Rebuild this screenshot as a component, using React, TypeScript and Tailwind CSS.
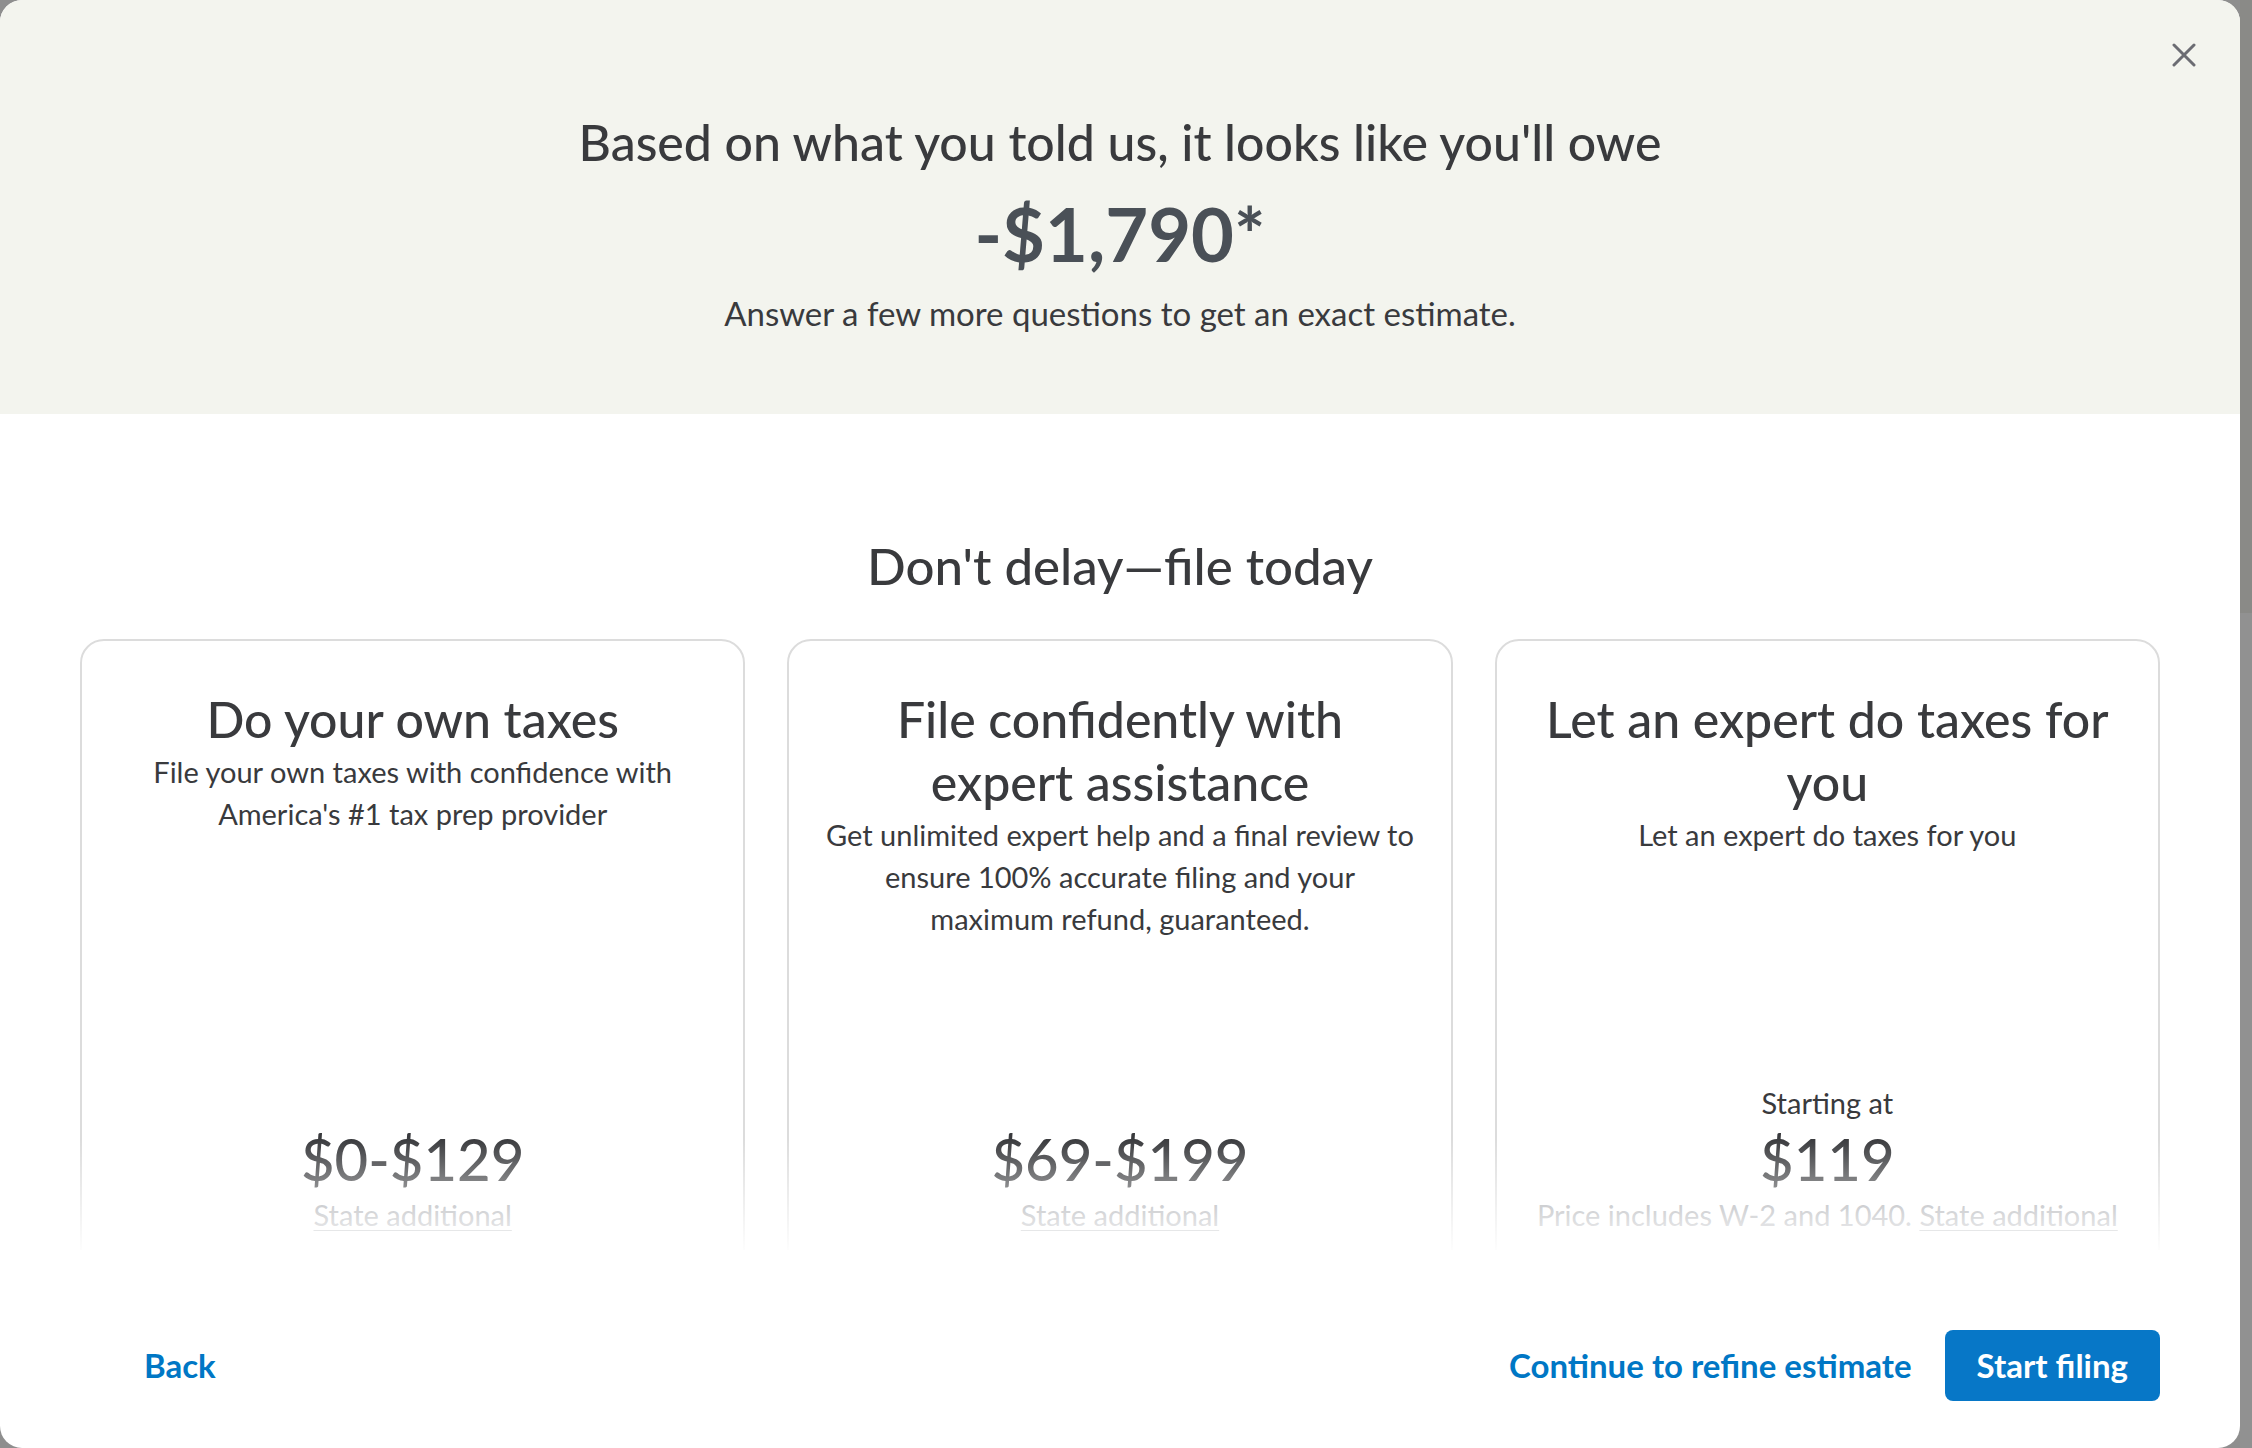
import React from 'react'

const font = { fontFamily: "Lato, 'Noto Sans', sans-serif" }

type Plan = {
  title: string[]
  sub: string[]
  starting?: boolean
  price: string
  note?: string
}

const plans: Plan[] = [
  {
    title: ['Do your own taxes'],
    sub: ['File your own taxes with confidence with', "America's #1 tax prep provider"],
    price: '$0-$129',
  },
  {
    title: ['File confidently with', 'expert assistance'],
    sub: [
      'Get unlimited expert help and a final review to',
      'ensure 100% accurate filing and your',
      'maximum refund, guaranteed.',
    ],
    price: '$69-$199',
  },
  {
    title: ['Let an expert do taxes for', 'you'],
    sub: ['Let an expert do taxes for you'],
    starting: true,
    price: '$119',
    note: 'Price includes W-2 and 1040.',
  },
]

function PlanCard({ plan }: { plan: Plan }) {
  return (
    <div className="flex h-[651px] flex-col rounded-[24px] border-2 border-[#dcdcdc] bg-white px-4 pt-[47px] text-center text-[#393a3d]">
      <h3 className="text-[50px] font-medium leading-[63px]">
        {plan.title.map(l => (
          <span key={l} className="block whitespace-nowrap">{l}</span>
        ))}
      </h3>
      <p className="text-[29px] leading-[42px]">
        {plan.sub.map(l => (
          <span key={l} className="block whitespace-nowrap">{l}</span>
        ))}
      </p>

      <div className="mt-auto mb-[52px]">
        {plan.starting && <div className="text-[29px] leading-[42px]">Starting at</div>}
        <div className="text-[58px] font-medium leading-[70px] text-[#393a3d]">{plan.price}</div>
        <div className="whitespace-nowrap text-[29px] leading-[42px] text-[#8d9096]">
          {plan.note && <span>{plan.note} </span>}
          <a className="underline decoration-1 underline-offset-4">State additional</a>
        </div>
      </div>
    </div>
  )
}

export default function App() {
  return (
    <div className="flex h-[1448px] w-[2252px] overflow-hidden bg-[#8e8e8e]" style={font}>
      <div className="relative flex h-full w-[2240px] flex-col overflow-hidden rounded-[22px] bg-white">
        {/* Close */}
        <button type="button" className="absolute right-[44px] top-[43px] text-[#6b6c72]">
          <svg width="24" height="24" viewBox="0 0 24 24" fill="none" stroke="currentColor" strokeWidth="3" strokeLinecap="round">
            <path d="M2 2 L22 22 M22 2 L2 22" />
          </svg>
        </button>

        {/* Estimate header */}
        <div className="flex flex-col items-center bg-[#f3f4ee] pt-[114px] pb-[81px] text-center">
          <h1 className="text-[50px] font-medium leading-[56px] text-[#393a3d]">
            Based on what you told us, it looks like you'll owe
          </h1>
          <div className="mt-6 text-[74px] font-bold leading-[80px] text-[#4a5057]">-$1,790*</div>
          <p className="mt-[19px] text-[33px] leading-[40px] text-[#393a3d]">
            Answer a few more questions to get an exact estimate.
          </p>
        </div>

        {/* Plans */}
        <h2 className="mt-[124px] text-center text-[51px] font-medium leading-[56px] text-[#393a3d]">
          Don't delay—file today
        </h2>

        <div className="relative mx-[80px] mt-[45px] h-[611px] overflow-hidden">
          <div className="grid grid-cols-3 gap-[42px]">
            {plans.map(p => (
              <PlanCard key={p.price} plan={p} />
            ))}
          </div>
          <div className="pointer-events-none absolute inset-x-0 bottom-0 h-[112px] bg-linear-to-b from-white/0 to-white/95" />
        </div>

        {/* Footer */}
        <div className="mt-auto flex items-center justify-between px-[80px] pb-[47px]">
          <a className="ml-[64px] text-[33px] font-bold text-[#0077c5]">Back</a>
          <div className="flex items-center gap-[33px]">
            <a className="text-[33px] font-bold text-[#0077c5]">Continue to refine estimate</a>
            <button type="button" className="h-[71px] rounded-[8px] bg-[#0777c7] px-[32px] text-[33px] font-bold text-white">
              Start filing
            </button>
          </div>
        </div>
      </div>

      <div className="flex h-full w-[12px] flex-col">
        <div className="h-[613px] bg-[#8a8a87]" />
        <div className="flex-1 bg-[#919191]" />
      </div>
    </div>
  )
}
